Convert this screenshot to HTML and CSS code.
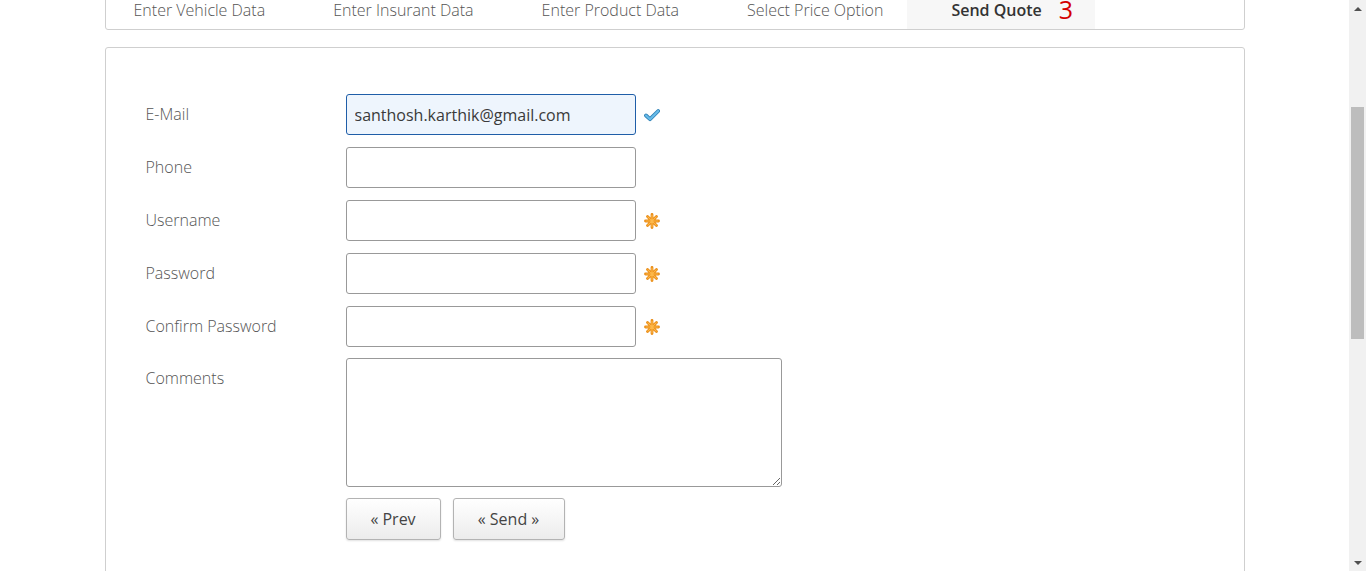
FILE: index.html
```html
<!DOCTYPE html>
<html lang="en">
<head>
<meta charset="utf-8">
<title>Send Quote</title>
<link rel="stylesheet" href="styles.css">
</head>
<body>
<div class="page">
  <header class="top"></header>
  <div class="container">
    <nav class="wizard">
      <ul class="tabs">
        <li class="tab first">Enter Vehicle Data</li>
        <li class="tab">Enter Insurant Data</li>
        <li class="tab">Enter Product Data</li>
        <li class="tab">Select Price Option</li>
        <li class="tab active">Send Quote<span class="count">3</span></li>
      </ul>
    </nav>
    <section class="panel">
      <form class="form">
        <div class="row">
          <label class="label">E-Mail</label>
          <input id="email" class="field focused" type="text" value="santhosh.karthik@gmail.com">
          <span class="mark">
            <svg viewBox="0 0 16 16" width="16" height="16"><path d="M2 8.5 L6 12.2 L14.2 4" fill="none" stroke="#2f80b5" stroke-width="3.8" stroke-linecap="round" stroke-linejoin="round"/><path d="M2 8.5 L6 12.2 L14.2 4" fill="none" stroke="#67bbe9" stroke-width="2.2" stroke-linecap="round" stroke-linejoin="round"/></svg>
          </span>
        </div>
        <div class="row">
          <label class="label">Phone</label>
          <input class="field" type="text">
        </div>
        <div class="row">
          <label class="label">Username</label>
          <input class="field" type="text">
          <span class="mark"><svg viewBox="0 0 16 16" width="16" height="16"><g stroke="#e98a12" stroke-width="2.8" stroke-linecap="round"><path d="M8 1.5v13M1.5 8h13M3.5 3.5l9 9M12.5 3.5l-9 9"/></g><g stroke="#fdb84a" stroke-width="1.2" stroke-linecap="round"><path d="M8 2v12M2 8h12M3.8 3.8l8.4 8.4M12.2 3.8l-8.4 8.4"/></g></svg></span>
        </div>
        <div class="row">
          <label class="label">Password</label>
          <input class="field" type="password">
          <span class="mark"><svg viewBox="0 0 16 16" width="16" height="16"><g stroke="#e98a12" stroke-width="2.8" stroke-linecap="round"><path d="M8 1.5v13M1.5 8h13M3.5 3.5l9 9M12.5 3.5l-9 9"/></g><g stroke="#fdb84a" stroke-width="1.2" stroke-linecap="round"><path d="M8 2v12M2 8h12M3.8 3.8l8.4 8.4M12.2 3.8l-8.4 8.4"/></g></svg></span>
        </div>
        <div class="row">
          <label class="label">Confirm Password</label>
          <input class="field" type="password">
          <span class="mark"><svg viewBox="0 0 16 16" width="16" height="16"><g stroke="#e98a12" stroke-width="2.8" stroke-linecap="round"><path d="M8 1.5v13M1.5 8h13M3.5 3.5l9 9M12.5 3.5l-9 9"/></g><g stroke="#fdb84a" stroke-width="1.2" stroke-linecap="round"><path d="M8 2v12M2 8h12M3.8 3.8l8.4 8.4M12.2 3.8l-8.4 8.4"/></g></svg></span>
        </div>
        <div class="row tight">
          <label class="label">Comments</label>
          <textarea class="area"></textarea>
        </div>
        <div class="row actions tight">
          <span class="label"></span>
          <button type="button" class="btn prev">« Prev</button>
          <button type="button" class="btn send">« Send »</button>
        </div>
      </form>
    </section>
  </div>
</div>
<div class="scrollbar">
  <span class="arrow up"></span>
  <div class="track"><div class="thumb"></div></div>
  <span class="arrow down"></span>
</div>
<script src="script.js"></script>
</body>
</html>
```

FILE: styles.css
```css
html {
  overflow-y: scroll;
}
body {
  margin: 0;
  font-family: "Open Sans", "Liberation Sans", sans-serif;
  color: #555;
  background: #fff;
}
.page {
  width: 1349px;
  min-height: 1322px;
}
.top {
  height: 206px;
}
.container {
  width: 1140px;
  margin: 0 auto;
}
.wizard {
  border: 1px solid #cfcfcf;
  border-radius: 3px;
}
.tabs {
  list-style: none;
  margin: 0;
  padding: 0;
  display: flex;
}
.tab {
  font-size: 16px;
  font-weight: 300;
  line-height: 22px;
  padding: 13px 24px 8px 44px;
  color: #555;
  white-space: nowrap;
}
.tab.first {
  padding-left: 28px;
}
.tab.active {
  background: #f7f7f7;
  color: #333;
  font-weight: 600;
  padding-right: 22px;
}
.count {
  color: #d40000;
  font-weight: 400;
  font-size: 25px;
  line-height: 0;
  vertical-align: -3px;
  margin-left: 17px;
}
.panel {
  margin-top: 17px;
  border: 1px solid #cfcfcf;
  border-radius: 3px;
  height: 900px;
}
.form {
  padding: 46px 40px;
  display: flex;
  flex-direction: column;
  gap: 12px;
}
.row {
  display: flex;
  align-items: flex-start;
}
.row.tight {
  margin-top: -1px;
}
.label {
  width: 200px;
  flex: none;
  font-size: 16px;
  font-weight: 300;
  line-height: 41px;
  color: #555;
}
.field {
  width: 290px;
  height: 41px;
  box-sizing: border-box;
  border: 1px solid #999;
  border-radius: 3px;
  padding: 0 8px;
  font-family: "Open Sans", "Liberation Sans", sans-serif;
  font-size: 16px;
  color: #3a3a3a;
  background: #fff;
  margin: 0;
}
.field.focused {
  border-color: #1f5ea8;
  background: #eef5fd;
  outline: none;
  caret-color: #1a1a1a;
}
.mark {
  display: flex;
  align-items: center;
  height: 41px;
  margin-left: 8px;
}
.area {
  width: 436px;
  height: 129px;
  box-sizing: border-box;
  border: 1px solid #999;
  border-radius: 3px;
  margin: 0;
  font-family: "Open Sans", "Liberation Sans", sans-serif;
  font-size: 16px;
}
.actions {
  gap: 12px;
}
.actions .label {
  margin-right: -12px;
}
.btn {
  height: 42px;
  box-sizing: border-box;
  border: 1px solid #b3b3b3;
  border-radius: 3px;
  background: linear-gradient(#ffffff, #ececec);
  box-shadow: 0 1px 2px rgba(0, 0, 0, 0.12);
  font-family: "Open Sans", "Liberation Sans", sans-serif;
  font-size: 16px;
  font-weight: 400;
  color: #444;
  padding: 0;
  margin: 0;
}
.prev {
  width: 95px;
}
.send {
  width: 112px;
}
.scrollbar {
  position: fixed;
  top: 0;
  right: 0;
  width: 17px;
  height: 100vh;
  background: #f1f1f1;
  display: flex;
  flex-direction: column;
  align-items: center;
}
.arrow {
  height: 17px;
  width: 17px;
  display: flex;
  align-items: center;
  justify-content: center;
  flex: none;
}
.arrow::before {
  content: "";
  border-left: 4px solid transparent;
  border-right: 4px solid transparent;
}
.arrow.up::before {
  border-bottom: 4px solid #505050;
}
.arrow.down::before {
  border-top: 4px solid #505050;
}
.track {
  flex: 1;
  width: 17px;
  padding-top: 90px;
  box-sizing: border-box;
  display: flex;
  justify-content: center;
}
.thumb {
  width: 13px;
  height: 232px;
  background: #bdbdbd;
}
```

FILE: script.js
```js
function setup() {
  window.scrollTo(0, 221);
  var el = document.getElementById('email');
  el.focus({ preventScroll: true });
  var n = el.value.length;
  el.setSelectionRange(n, n);
  window.scrollTo(0, 221);
}
setup();
window.addEventListener('load', setup);
```
